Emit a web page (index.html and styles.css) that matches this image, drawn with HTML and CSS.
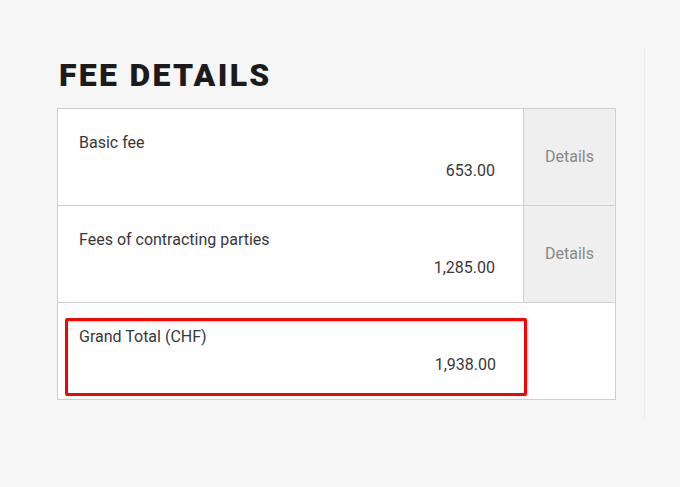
FILE: index.html
```html
<!DOCTYPE html>
<html lang="en">
<head>
    <meta charset="UTF-8">
    <meta name="viewport" content="width=device-width, initial-scale=1.0">
    <title>Fee details</title>
    <link rel="stylesheet" href="styles.css">
</head>
<body>
    <div class="panel">
        <h1 class="title">FEE DETAILS</h1>

        <!-- fee table -->
        <div class="fees">
            <div class="fee-row">
                <div class="fee-main">
                    <span class="fee-label">Basic fee</span>
                    <span class="fee-amount">653.00</span>
                </div>
                <div class="fee-link">Details</div>
            </div>
            <div class="fee-row">
                <div class="fee-main">
                    <span class="fee-label">Fees of contracting parties</span>
                    <span class="fee-amount">1,285.00</span>
                </div>
                <div class="fee-link">Details</div>
            </div>
            <div class="fee-row total-row">
                <div class="total-box">
                    <span class="fee-label">Grand Total (CHF)</span>
                    <span class="fee-amount">1,938.00</span>
                </div>
            </div>
        </div>
    </div>
</body>
</html>
```

FILE: styles.css
```css
body {
    font-family: Roboto, "Liberation Sans", sans-serif;
    margin: 0;
    padding: 0;
    background-color: #f6f6f6;
    color: #383838;
}
.panel {
    box-sizing: border-box;
    width: 645px;
    height: 372px;
    margin-top: 47px;
    padding: 10px 0 0 57px;
    border-right: 1px solid #ebebeb;
}
.title {
    margin: 0 0 15px 2px;
    font-size: 32px;
    line-height: 36px;
    font-weight: 900;
    letter-spacing: 2.3px;
    color: #1b1b1b;
}
.fees {
    width: 559px;
    box-sizing: border-box;
    border: 1px solid #cfcfcf;
    background: #fff;
}
.fee-row {
    display: flex;
    height: 96px;
    border-bottom: 1px solid #cfcfcf;
}
.fee-row:last-child {
    border-bottom: none;
}
.fee-main {
    width: 465px;
    box-sizing: border-box;
    padding: 24px 28px 0 21px;
    display: flex;
    flex-direction: column;
}
.fee-label {
    font-size: 16px;
    line-height: 20px;
}
.fee-amount {
    font-size: 16px;
    line-height: 20px;
    margin-top: 8px;
    text-align: right;
}
.fee-link {
    flex: 1;
    display: flex;
    align-items: center;
    justify-content: center;
    padding-bottom: 2px;
    background: #efefef;
    border-left: 1px solid #cfcfcf;
    color: #888;
    font-size: 16px;
}
.total-box {
    width: 462px;
    height: 78px;
    box-sizing: border-box;
    margin: 15px 0 0 7px;
    padding: 6px 28px 0 11px;
    border: 3px solid #f00;
    border-radius: 2px;
    display: flex;
    flex-direction: column;
}
```
